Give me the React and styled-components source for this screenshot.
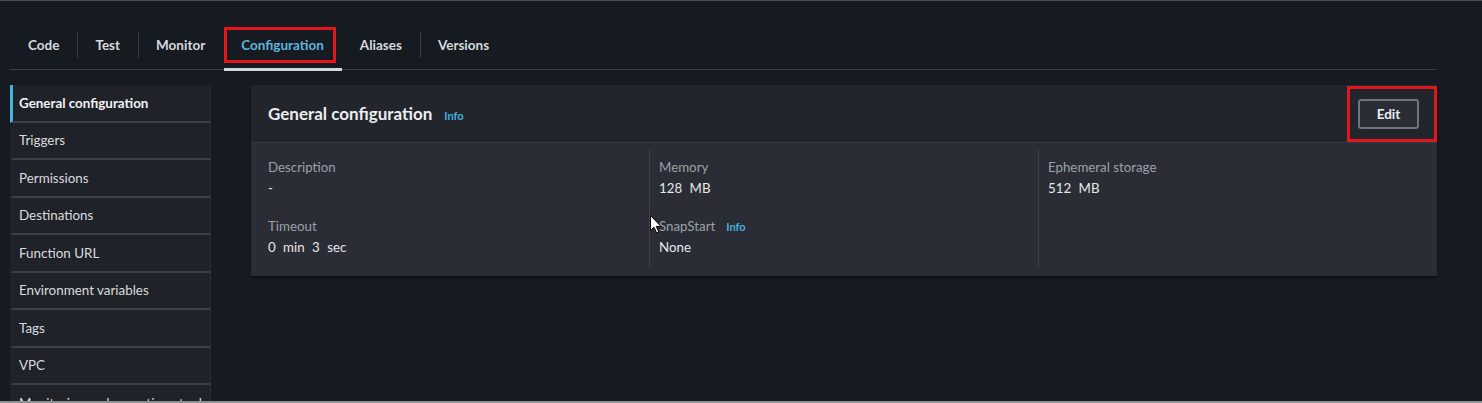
import React from "react";
import styled, { createGlobalStyle } from "styled-components";

const GlobalStyle = createGlobalStyle`
  html, body {
    margin: 0;
    padding: 0;
    background: #161a21;
  }
  body {
    font-family: Lato, "Open Sans", sans-serif;
    color: #e6e8ea;
  }
`;

const Frame = styled.div`
  height: 403px;
  box-sizing: border-box;
  overflow: hidden;
  position: relative;
  border-top: 1px solid #4a4d52;
  border-bottom: 2px solid #8d9094;
  background: #161a21;
  padding: 26px 45px 0 10px;
`;

const TabBar = styled.div`
  display: flex;
  align-items: stretch;
  height: 42px;
  border-bottom: 1px solid #3a3e46;
`;

const Tab = styled.div`
  position: relative;
  display: flex;
  align-items: center;
  padding: 0 18px 6px;
  font-size: 13.5px;
  font-weight: 700;
  color: ${p => (p.active ? "#5db5dd" : "#d6d9dd")};
  & + & {
    &::before {
      content: "";
      position: absolute;
      left: 0;
      top: 5px;
      height: 26px;
      width: 1px;
      background: #3a3e45;
    }
  }
  ${p =>
    p.active &&
    `
    &::after {
      content: "";
      position: absolute;
      left: 1px;
      right: 0;
      bottom: -2px;
      height: 3px;
      background: #d4d7db;
    }
  `}
`;

const Highlight = styled.div`
  position: absolute;
  border: 3px solid #e3151d;
  pointer-events: none;
  box-sizing: border-box;
  left: ${p => p.left}px;
  top: ${p => p.top}px;
  width: ${p => p.width}px;
  height: ${p => p.height}px;
`;

const Body = styled.div`
  display: flex;
  gap: 40px;
  margin-top: 15px;
  align-items: flex-start;
`;

const Sidebar = styled.nav`
  width: 201px;
  flex: none;
  display: flex;
  flex-direction: column;
`;

const NavItem = styled.div`
  height: 37.5px;
  box-sizing: border-box;
  display: flex;
  align-items: center;
  padding-left: 6px;
  font-size: 13.4px;
  font-weight: ${p => (p.active ? 700 : 400)};
  color: ${p => (p.active ? "#f2f3f4" : "#d9dcdf")};
  background: #1f2229;
  border-bottom: 2px solid #3b3f47;
  border-left: 3px solid ${p => (p.active ? "#44b4d8" : "#1f2229")};
  border-right: 1px solid #2c3038;
  white-space: nowrap;
  overflow: hidden;
`;

const Panel = styled.section`
  flex: 1;
  position: relative;
  background: #2a2d35;
  box-shadow: 0 2px 2px rgba(0, 0, 0, 0.45);
`;

const PanelHeader = styled.header`
  height: 57px;
  display: flex;
  align-items: center;
  justify-content: space-between;
  padding: 0 18px 0 17px;
  background: #22252c;
  border-bottom: 1px solid #353943;
`;

const Title = styled.h2`
  margin: 0;
  display: flex;
  align-items: baseline;
  gap: 12px;
  font-size: 17px;
  font-weight: 700;
  color: #eceef0;
`;

const InfoLink = styled.span`
  font-size: 11px;
  font-weight: 700;
  color: #42b0df;
`;

const EditButton = styled.button`
  width: 61px;
  height: 30px;
  border: 2px solid #70757c;
  border-radius: 3px;
  background: #2a2d35;
  color: #eceef0;
  font-family: inherit;
  font-size: 13.5px;
  font-weight: 700;
  margin-top: 1px;
`;

const Columns = styled.div`
  display: grid;
  grid-template-columns: 381px 389px 1fr;
  padding: 7px 17px 8px 17px;
`;

const Column = styled.div`
  padding: 9px 0 12px ${p => (p.first ? 0 : 9)}px;
  border-left: ${p => (p.first ? "none" : "1px solid #3d4149")};
  display: flex;
  flex-direction: column;
`;

const Field = styled.div`
  display: flex;
  flex-direction: column;
  gap: 4px;
  & + & {
    margin-top: 21px;
  }
`;

const Label = styled.div`
  display: flex;
  align-items: baseline;
  gap: 11px;
  font-size: 13.3px;
  line-height: 17px;
  color: #9ca1a8;
`;

const Value = styled.div`
  font-size: 13.3px;
  line-height: 17px;
  color: #e6e8ea;
  word-spacing: 4px;
`;

const Cursor = styled.svg`
  position: absolute;
  left: 399px;
  top: 130px;
  width: 12px;
  height: 19px;
  pointer-events: none;
`;

const tabs = ["Code", "Test", "Monitor", "Configuration", "Aliases", "Versions"];
const navItems = [
  "General configuration",
  "Triggers",
  "Permissions",
  "Destinations",
  "Function URL",
  "Environment variables",
  "Tags",
  "VPC",
  "Monitoring and operations tools",
];

export default function App() {
  return (
    <>
      <GlobalStyle />
      <Frame>
        <TabBar>
          {tabs.map(t => (
            <Tab key={t} active={t === "Configuration"}>
              {t}
            </Tab>
          ))}
        </TabBar>
        <Highlight left={224} top={26} width={112} height={36} />

        <Body>
          <Sidebar>
            {navItems.map((n, i) => (
              <NavItem key={n} active={i === 0}>
                {n}
              </NavItem>
            ))}
          </Sidebar>

          <Panel>
            <PanelHeader>
              <Title>
                General configuration <InfoLink>Info</InfoLink>
              </Title>
              <EditButton>Edit</EditButton>
            </PanelHeader>
            <Columns>
              <Column first>
                <Field>
                  <Label>Description</Label>
                  <Value>-</Value>
                </Field>
                <Field>
                  <Label>Timeout</Label>
                  <Value>0 min 3 sec</Value>
                </Field>
              </Column>
              <Column>
                <Field>
                  <Label>Memory</Label>
                  <Value>128 MB</Value>
                </Field>
                <Field>
                  <Label>
                    SnapStart <InfoLink>Info</InfoLink>
                  </Label>
                  <Value>None</Value>
                </Field>
              </Column>
              <Column>
                <Field>
                  <Label>Ephemeral storage</Label>
                  <Value>512 MB</Value>
                </Field>
              </Column>
            </Columns>
            <Cursor viewBox="0 0 12 19">
              <path
                d="M0.5 0.5 L0.5 15.5 L4 12.2 L6.6 18 L8.8 17 L6.3 11.4 L11 11.4 Z"
                fill="#ffffff"
                stroke="#000000"
                strokeWidth="1"
                strokeLinejoin="round"
              />
            </Cursor>
          </Panel>
        </Body>
        <Highlight left={1347} top={85} width={90} height={56} />
      </Frame>
    </>
  );
}
